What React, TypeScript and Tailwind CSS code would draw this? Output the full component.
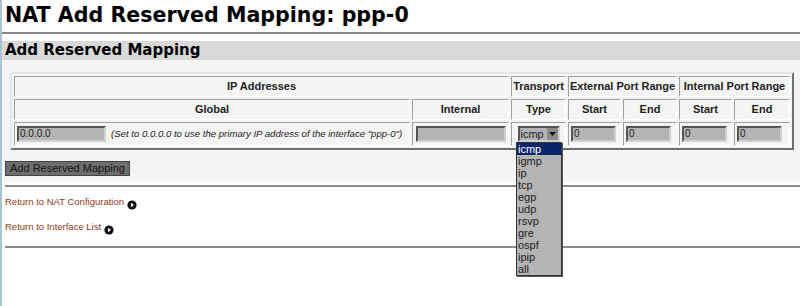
import React from 'react';

const GoIcon: React.FC = () => (
  <svg width="10" height="10" viewBox="0 0 10 10" className="ml-[3px] mt-[5px] inline-block">
    <circle cx="5" cy="5" r="4.6" fill="#111" />
    <path d="M4 2.8 L7 5 L4 7.2 Z" fill="#fff" />
  </svg>
);

const options = ['icmp', 'igmp', 'ip', 'tcp', 'egp', 'udp', 'rsvp', 'gre', 'ospf', 'ipip', 'all'];

const cell =
  'border border-t-[#a0a0a0] border-l-[#a0a0a0] border-b-white border-r-white bg-[#f4f4f4] p-0';
const head = `${cell} h-[21px] text-center font-bold text-[11px] text-[#222]`;
const box =
  'h-[16px] border-2 border-t-[#555] border-l-[#555] border-b-[#d0d0d0] border-r-[#d0d0d0] bg-[#b4b4b4] px-[1px] text-[10px] leading-[12px] text-[#222]';

const App: React.FC = () => {
  return (
    <div className="flex min-h-[306px] bg-white" style={{ fontFamily: '"Liberation Sans", Arial, sans-serif' }}>
      <div className="w-[2px] shrink-0 bg-[#a9c6ce]" />
      <div className="flex-1">
        <h1
          className="pl-[3px] pt-[1px] text-[20.6px] font-bold leading-[28px] text-black"
          style={{ fontFamily: '"DejaVu Sans", Verdana, sans-serif' }}
        >
          NAT Add Reserved Mapping: ppp-0
        </h1>
        <div className="mt-[3px] border-t-2 border-[#8a8a8a]" />
        <div className="mt-[7px] bg-[#f4f4f4]">
          <div
            className="h-[19px] bg-[#d9d9d9] pl-[3px] text-[15px] font-bold leading-[19px] text-black"
            style={{ fontFamily: '"DejaVu Sans", Verdana, sans-serif' }}
          >
            Add Reserved Mapping
          </div>
          <div className="pl-[8px] pr-[6px] pt-[12px]">
            <table className="w-full border-separate border-spacing-[2px] border-2 border-t-[#e6e6e6] border-l-[#e6e6e6] border-b-[#707070] border-r-[#707070]">
              <tbody>
                <tr>
                  <td colSpan={2} className={head}>IP Addresses</td>
                  <td className={head}>Transport</td>
                  <td colSpan={2} className={head}>External Port Range</td>
                  <td colSpan={2} className={head}>Internal Port Range</td>
                </tr>
                <tr>
                  <td className={`${head} w-[396px]`}>Global</td>
                  <td className={`${head} w-[97px]`}>Internal</td>
                  <td className={`${head} w-[55px]`}>Type</td>
                  <td className={`${head} w-[53px]`}>Start</td>
                  <td className={`${head} w-[54px]`}>End</td>
                  <td className={`${head} w-[53px]`}>Start</td>
                  <td className={head}>End</td>
                </tr>
                <tr>
                  <td className={`${cell} h-[24px]`}>
                    <div className="flex items-center pl-[2px]">
                      <div className={`${box} w-[89px] shrink-0`}>0.0.0.0</div>
                      <span className="ml-[5px] whitespace-nowrap text-[9.6px] italic text-[#222]">
                        (Set to 0.0.0.0 to use the primary IP address of the interface "ppp-0")
                      </span>
                    </div>
                  </td>
                  <td className={cell}>
                    <div className="flex justify-center">
                      <div className={`${box} w-[90px]`} />
                    </div>
                  </td>
                  <td className={cell}>
                    <div className="relative flex justify-center">
                      <div className="flex h-[16px] w-[42px] items-center border-2 border-t-[#555] border-l-[#555] border-b-[#d0d0d0] border-r-[#d0d0d0] bg-[#b4b4b4]">
                        <span className="flex-1 pl-[1px] text-[11px] leading-[12px] text-[#222]">icmp</span>
                        <span className="flex h-[12px] w-[11px] items-center justify-center bg-[#8a8a8a]">
                          <svg width="7" height="4" viewBox="0 0 7 4">
                            <path d="M0 0 H7 L3.5 4 Z" fill="#111" />
                          </svg>
                        </span>
                      </div>
                      <div className="absolute left-[4px] top-[16px] z-10 w-[46px] border border-[#333] bg-[#b4b4b4] shadow-[1px_1px_0_#555]">
                        {options.map((o, i) => (
                          <div
                            key={o}
                            className={
                              i === 0
                                ? 'h-[12px] bg-[#0a246a] pl-[1px] text-[11px] leading-[12px] text-white'
                                : 'h-[12px] pl-[1px] text-[11px] leading-[12px] text-[#222]'
                            }
                          >
                            {o}
                          </div>
                        ))}
                      </div>
                    </div>
                  </td>
                  {[0, 1, 2, 3].map((k) => (
                    <td key={k} className={cell}>
                      <div className="flex pl-[2px]">
                        <div className={`${box} w-[45px]`}>0</div>
                      </div>
                    </td>
                  ))}
                </tr>
              </tbody>
            </table>
          </div>
          <div className="pb-[3px] pl-[3px] pt-[5px]">
            <button className="h-[15px] w-[125px] border border-[#444] bg-[#6e6e6e] text-[11px] leading-[13px] text-[#151515]">
              Add Reserved Mapping
            </button>
          </div>
        </div>
        <div className="ml-[3px] mt-[3px] border-t-2 border-[#8a8a8a]" />
        <div className="pl-[3px] pt-[8px] text-[9.5px] text-[#8b3a1c]">
          <div className="flex items-start">
            <a href="#" className="leading-[14px]">Return to NAT Configuration</a>
            <GoIcon />
          </div>
          <div className="mt-[10px] flex items-start">
            <a href="#" className="leading-[14px]">Return to Interface List</a>
            <GoIcon />
          </div>
        </div>
        <div className="ml-[3px] mt-[11px] border-t-2 border-[#8a8a8a]" />
      </div>
    </div>
  );
};

export default App;
